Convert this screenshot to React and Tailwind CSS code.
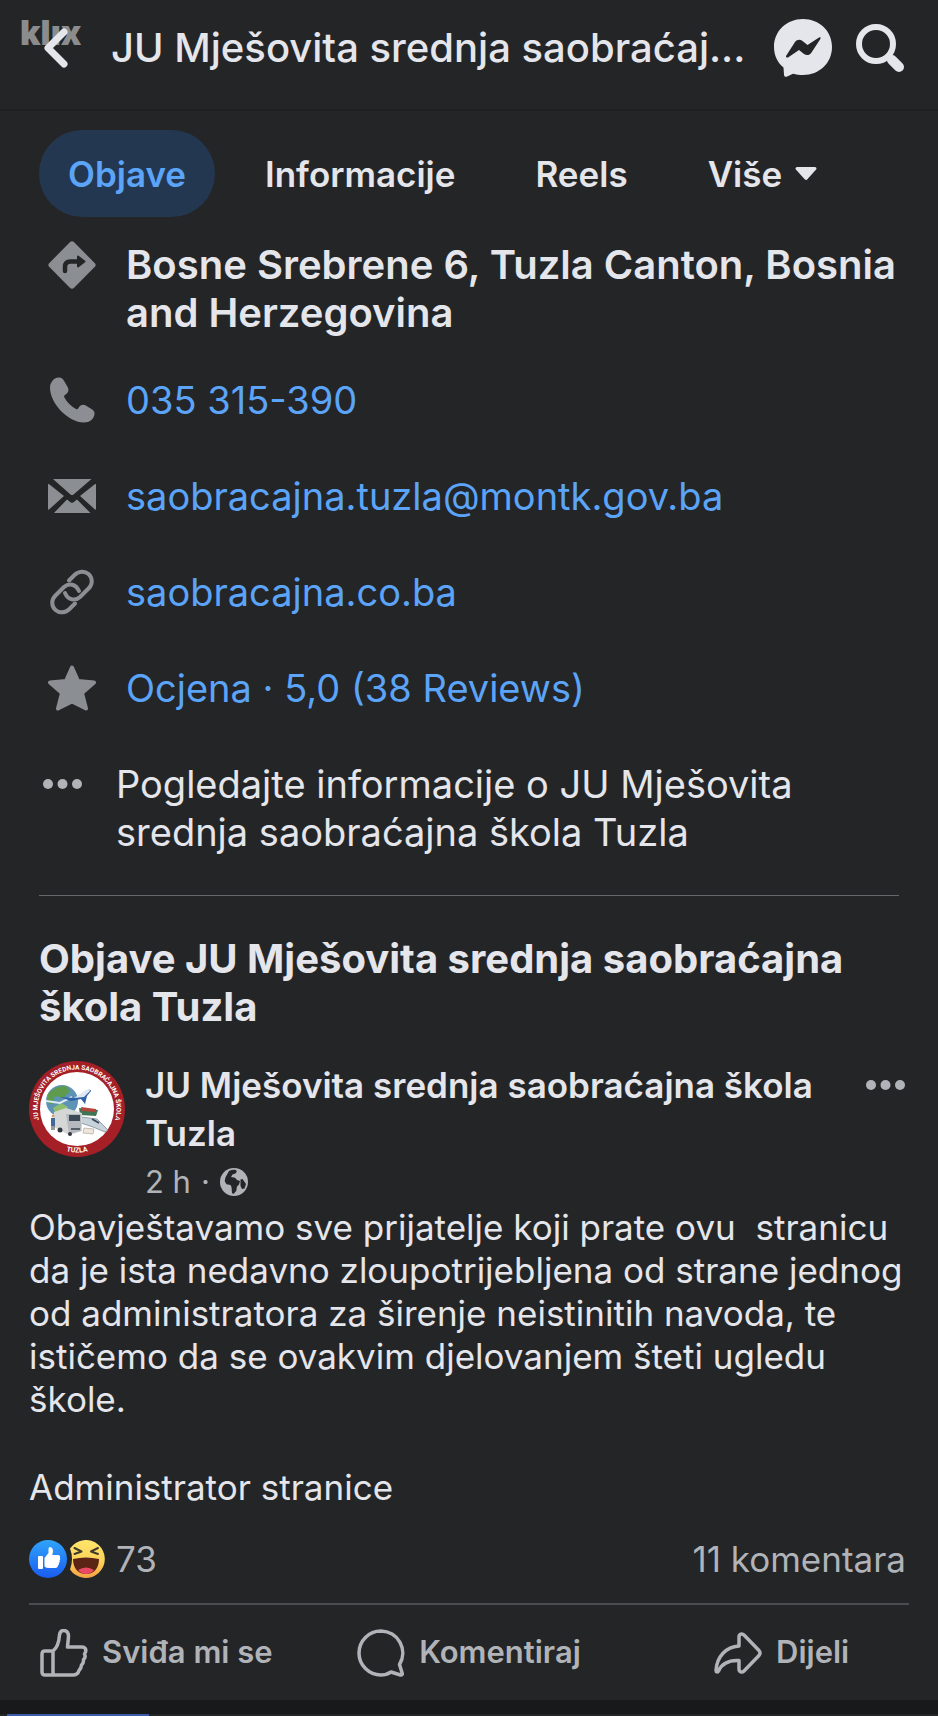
import React from 'react';

const MESSENGER = 'M29 0C12.500 0 0 12 0 28c0 8.500 3.500 15.500 9.500 20.500L10 55.500c0 2 1.500 2.800 3.200 2L19 54.700c3.200.9 6.500 1.300 10 1.300 16.500 0 29-12 29-28S45.500 0 29 0z';

function Dots() {
  return (
    <svg viewBox="0 0 40 10" className="w-10 h-[10px]" fill="#b0b3b8" aria-hidden="true">
      <circle cx="5" cy="5" r="5" />
      <circle cx="19.500" cy="5" r="5" />
      <circle cx="34" cy="5" r="5" />
    </svg>
  );
}

function DirectionsIcon() {
  return (
    <svg viewBox="0 0 48 48" className="w-12 h-12" aria-hidden="true">
      <rect x="6.500" y="6.500" width="35" height="35" rx="3" fill="#8b8e92" transform="rotate(45 24 24)" />
      <path d="M17 30v-4q0-5.500 5.500-5.500H31" fill="none" stroke="#242527" strokeWidth="4.500" strokeLinecap="round" />
      <path d="M30 15.500l6.500 5-6.500 5z" fill="#242527" stroke="#242527" strokeWidth="2" strokeLinejoin="round" />
    </svg>
  );
}

function PhoneIcon() {
  return (
    <svg viewBox="0 0 48 48" className="w-12 h-12" fill="#8b8e92" aria-hidden="true">
      <path d="M10.500 1.500C5.500 2 2 6.500 2 12c0 15 18 34.500 34 34.500 5.500 0 10-3.500 10.500-8.500.2-2-.5-3.500-2.300-4.600l-6-3.700c-3-1.700-6-.7-7.700 2.300-.8 1.200-1.500 1.400-2.500.9-5-2.700-9-6.700-11.600-11.500-.6-1-.3-1.900.9-2.600 3-1.700 4-4.800 2.300-7.800L15.500 4c-1.200-2-2.800-2.800-5-2.500z" />
    </svg>
  );
}

function MailIcon() {
  return (
    <svg viewBox="0 0 48 48" className="w-12 h-12" fill="#8b8e92" aria-hidden="true">
      <path d="M5 7h38.500L25.500 22.500q-1.500 1.200-3 0z" />
      <path d="M0 12.500q0-1 .9-.4L16 24 1 37.500q-1 .8-1-.5z" />
      <path d="M48 12.500q0-1-.9-.4L32 24l15 13.500q1 .8 1-.5z" />
      <path d="M6 41l13-13.500 3.500 2.800q1.500 1 3 0l3.500-2.800L42.500 41z" />
    </svg>
  );
}

function LinkIcon() {
  return (
    <svg viewBox="0 0 48 48" className="w-12 h-12" fill="none" stroke="#8b8e92" strokeWidth="4" strokeLinecap="round" aria-hidden="true">
      <path d="M21 12.500l5.500-5.500c4-4 10-4.500 14-1s4.500 10 .5 14l-9 9c-5 4.500-12 3-15-4" />
      <path d="M27 35.500L21.500 41c-4 4-10 4.500-14 1s-4.500-10-.5-14l9-9c5-4.500 12-3 15 4" />
    </svg>
  );
}

function StarIcon() {
  return (
    <svg viewBox="0 0 48 48" className="w-12 h-12" fill="#8b8e92" stroke="#8b8e92" strokeWidth="4" strokeLinejoin="round" aria-hidden="true">
      <path d="M24 3.500l6 13.500 16 1.500-12 10.500 4 15.500-14-7-14 7 4-15.500L2 18.500 18 17z" />
    </svg>
  );
}

function SchoolLogo() {
  return (
    <svg viewBox="0 0 96 96" className="w-24 h-24 shrink-0" role="img" aria-label="Logo škole">
      <defs>
        <path id="ring-top" d="M14 68A39.500 39.500 0 1 1 82 68" />
        <path id="ring-bottom" d="M20 81.500A44 44 0 0 0 76 81.500" />
      </defs>
      <circle cx="48" cy="48" r="48" fill="#a51f26" />
      <circle cx="48" cy="48" r="37" fill="#fff" />
      <circle cx="33" cy="40" r="16" fill="#5d93b5" />
      <path d="M19 33q8-9 18-8l4 5-7 7-8-2-3 9-5-3z" fill="#5f9b4c" />
      <path d="M24 47l8-5 7 4-3 8-8 2z" fill="#8dbd6e" />
      <path d="M17 40l14 2 12-6" stroke="#dcebf2" strokeWidth="2" fill="none" />
      <path d="M31 36l16 1 11-8q4-1 4 1l-4 5-2 8-4-5-10 2z" fill="#2f62a8" />
      <path d="M45 37l12-8q4-1 4 1l-6 6z" fill="#dfe8f1" />
      <path d="M50 47l19 2-2 6-16-1z" fill="#3f7554" />
      <path d="M52 46l15 2v3l-14-1z" fill="#b3463d" />
      <path d="M52 56l16 2 11 11-3 2-12-5-12-4z" fill="#c8d2da" stroke="#7b8b9c" strokeWidth=".8" />
      <path d="M63 58l7 4" stroke="#3a4a5c" strokeWidth="2" />
      <path d="M25 51l12-4 16 5v18l-13 4-15-8z" fill="#d5d6d6" />
      <path d="M37 53l15 0v17l-12 3z" fill="#b5b9bd" />
      <path d="M40 54h11v6H40z" fill="#3c4957" />
      <path d="M42 67h9v2h-9z" fill="#555d66" />
      <circle cx="31" cy="69" r="2.500" fill="#33383e" />
      <circle cx="41" cy="73" r="2" fill="#33383e" />
      <path d="M22 57h4v8h-4z" fill="#43699c" />
      <circle cx="24" cy="55" r="1.500" fill="#d8a06e" />
      <path d="M23 65v4M25 65v4" stroke="#333" strokeWidth="1" />
      <path d="M55 67l10 1-1 5-10-1z" fill="#eee5dc" stroke="#b1a59c" strokeWidth=".7" />
      <text fill="#fff" fontSize="6.500" fontWeight="700" fontFamily="Roboto, sans-serif">
        <textPath href="#ring-top" startOffset="50%" textAnchor="middle">JU MJEŠOVITA SREDNJA SAOBRAĆAJNA ŠKOLA</textPath>
      </text>
      <text fill="#fff" fontSize="7" fontWeight="700" fontFamily="Roboto, sans-serif">
        <textPath href="#ring-bottom" startOffset="50%" textAnchor="middle">TUZLA</textPath>
      </text>
    </svg>
  );
}

function GlobeIcon() {
  return (
    <svg viewBox="0 0 28 28" className="w-7 h-7" aria-hidden="true">
      <circle cx="14" cy="14" r="14" fill="#b0b3b8" />
      <path d="M9 3q3-1.500 6-1.200l2 1.200-1.500 2.500-3 1L11 9l4 .8 2 2.200 3 1-1 3.500-2 2-.8 4.500-2.700 3-1.500-1L11.500 19l-1-2-4-.8-1.800-3 .8-4z" fill="#242527" />
      <path d="M20.500 11.500l2-.5 3.500 5-1.500 4.500-2.500.5-1.500-3z" fill="#242527" />
    </svg>
  );
}

function LikeBadge() {
  return (
    <svg viewBox="0 0 38 38" className="w-[38px] h-[38px]" aria-hidden="true">
      <defs>
        <linearGradient id="like" x1="0" y1="0" x2="0" y2="1">
          <stop offset="0" stopColor="#2fa4fa" />
          <stop offset="1" stopColor="#1a5cf0" />
        </linearGradient>
      </defs>
      <circle cx="19" cy="19" r="19" fill="url(#like)" />
      <rect x="9" y="16" width="5" height="13" rx="1" fill="#fff" />
      <path d="M15.500 18l4-5V9q0-2 1.500-2 3 .3 3 4.500l-.7 3.500H29q2.500.3 2 2.800.6 1.500-.4 2.700.5 1.500-.6 2.500.2 1.800-1 2.500-.2 2.500-3 2.500h-6q-3 0-4.500-1.500z" fill="#fff" />
    </svg>
  );
}

function HahaBadge() {
  return (
    <svg viewBox="0 0 38 38" className="w-[38px] h-[38px]" aria-hidden="true">
      <defs>
        <linearGradient id="haha" x1="0" y1="0" x2="0" y2="1">
          <stop offset="0" stopColor="#fee56b" />
          <stop offset=".6" stopColor="#fdd058" />
          <stop offset="1" stopColor="#f5a143" />
        </linearGradient>
      </defs>
      <path d="M3 8.500A19 19 0 1 1 3 29.500Q5 24.500 5 19T3 8.500z" fill="url(#haha)" />
      <path d="M7.500 8l7 3.500-7 2.500M31 8l-7 3.500 7 2.500" stroke="#3f3a2d" strokeWidth="2" fill="none" strokeLinecap="round" strokeLinejoin="round" />
      <path d="M6 19q13-3 26 0c0 9-5 15-13 15S6 28 6 19z" fill="#5b2415" />
      <path d="M11 30q8-5 16 0-3 4-8 4t-8-4z" fill="#ec4a64" />
    </svg>
  );
}

const tabs = ['Informacije', 'Reels'];

const contacts = [
  { label: '035 315-390', href: 'tel:035315390', Icon: PhoneIcon },
  { label: 'saobracajna.tuzla@montk.gov.ba', href: 'mailto:saobracajna.tuzla@montk.gov.ba', Icon: MailIcon },
  { label: 'saobracajna.co.ba', href: '#web', Icon: LinkIcon },
  { label: 'Ocjena · 5,0 (38 Reviews)', href: '#reviews', Icon: StarIcon },
];

export default function App() {
  return (
    <div className="min-h-screen bg-[#242527] text-[#e4e6eb] font-['Inter',sans-serif]">
      {/* Top bar */}
      <header className="relative flex items-center h-[111px] pb-[14px] pl-10 pr-[34px] border-b-2 border-[#1f2022]">
        <span className="absolute left-5 top-[13px] text-[34px] leading-[40px] font-black text-[#8b8c8d]" aria-hidden="true">klıx</span>
        <button type="button" aria-label="Nazad" className="relative w-8 h-12 shrink-0">
          <svg viewBox="0 0 32 48" className="w-8 h-12" fill="none" stroke="#e4e6eb" strokeWidth="7" strokeLinecap="round" strokeLinejoin="round">
            <path d="M24 8L8 24l16 16" />
          </svg>
        </button>
        <h1 className="flex-1 min-w-0 ml-[39px] text-[40px] leading-[48px] font-medium whitespace-nowrap">
          JU Mješovita srednja saobraćaj...
        </h1>
        <div className="flex items-center gap-6">
          <button type="button" aria-label="Messenger">
            <svg viewBox="0 0 58 58" className="w-[58px] h-[58px]">
              <path d={MESSENGER} fill="#e4e6eb" />
              <path d="M12 37l9-14c2-2.500 5-3 7.500-1l5 4 11.500-7.500q2-.6 1.500 1.300L37.500 33.500c-2 3-5 3.300-7.500 1.500l-5-4-11 7.500q-2.500.5-2-1.500z" fill="#242527" />
            </svg>
          </button>
          <button type="button" aria-label="Pretraži">
            <svg viewBox="0 0 48 48" className="w-12 h-12" fill="none" stroke="#e4e6eb">
              <circle cx="20" cy="20" r="17" strokeWidth="6" />
              <path d="M32 32l4 4" strokeWidth="6" />
              <path d="M36 36l7 7" strokeWidth="10" strokeLinecap="round" />
            </svg>
          </button>
        </div>
      </header>

      {/* Tabs */}
      <nav className="flex items-center pt-[19px] pl-[39px] text-[35px] leading-[44px] font-semibold">
        <button type="button" className="h-[87px] px-[29px] rounded-full bg-[#233850] text-[#5ba4f8]">Objave</button>
        <div className="flex items-center gap-20 ml-[50px]">
          {tabs.map((tab) => (
            <button key={tab} type="button">{tab}</button>
          ))}
          <button type="button" className="flex items-center gap-3">
            Više
            <svg viewBox="0 0 24 16" className="w-6 h-4" fill="#e4e6eb" stroke="#e4e6eb" strokeWidth="3" strokeLinejoin="round" aria-hidden="true">
              <path d="M3 2.500h18L12 12.500z" />
            </svg>
          </button>
        </div>
      </nav>

      {/* Page info */}
      <section className="mx-[39px] pt-6 pb-[39px] border-b border-[#65676b] text-[38px] leading-[48px]">
        <div className="flex gap-[30px] pl-[9px] mb-[39px]">
          <DirectionsIcon />
          <p className="flex-1 text-[40px] leading-[48px] font-semibold">Bosne Srebrene 6, Tuzla Canton, Bosnia<br />and Herzegovina</p>
        </div>
        <ul className="flex flex-col gap-12">
          {contacts.map(({ label, href, Icon }) => (
            <li key={label} className="flex gap-[30px] pl-[9px]">
              <Icon />
              <a href={href} className="text-[#5ba4f8]">{label}</a>
            </li>
          ))}
        </ul>
        <a href="#about" className="flex gap-[33px] pl-1 mt-12">
          <span className="flex items-center h-12"><Dots /></span>
          <span className="flex-1">Pogledajte informacije o JU Mješovita<br />srednja saobraćajna škola Tuzla</span>
        </a>
      </section>

      <h2 className="px-[39px] pt-[39px] text-[40px] leading-[48px] font-bold">
        Objave JU Mješovita srednja saobraćajna<br />škola Tuzla
      </h2>

      {/* Post */}
      <article className="px-[29px]">
        <div className="flex pt-[30px]">
          <SchoolLogo />
          <div className="flex-1 ml-5">
            <h3 className="text-[35px] leading-[48px] font-semibold">JU Mješovita srednja saobraćajna škola<br />Tuzla</h3>
            <p className="flex items-center gap-[10px] text-[31px] leading-[49px] text-[#b0b3b8]">
              2 h <span>·</span> <GlobeIcon />
            </p>
          </div>
          <button type="button" aria-label="Više opcija" className="h-12 pr-[3px] shrink-0"><Dots /></button>
        </div>

        <p className="text-[35px] leading-[43px]">
          Obavještavamo sve prijatelje koji prate ovu &nbsp;stranicu<br />
          da je ista nedavno zloupotrijebljena od strane jednog<br />
          od administratora za širenje neistinitih navoda, te<br />
          ističemo da se ovakvim djelovanjem šteti ugledu<br />
          škole.
        </p>
        <p className="mt-[45px] text-[35px] leading-[43px]">Administrator stranice</p>

        <div className="flex items-center mt-7 pr-[3px] text-[35px] leading-[44px] text-[#b0b3b8]">
          <LikeBadge />
          <HahaBadge />
          <span className="ml-[11px]">73</span>
          <span className="ml-auto">11 komentara</span>
        </div>

        <div className="mt-[22px] border-t-2 border-[#4a4c50]">
          <div className="grid grid-cols-3 -mx-[29px] h-[95px] text-[31px] font-semibold text-[#b0b3b8]">
            <button type="button" className="flex items-center justify-center gap-[14px]">
              <svg viewBox="0 0 48 48" className="w-12 h-12" fill="none" stroke="#b0b3b8" strokeWidth="3.500" strokeLinejoin="round" aria-hidden="true">
                <path d="M13 22v24M5 22h8c4-3 6-9 6.500-16 .4-3 2-4.500 4-4.500 3.500 0 5 2.500 5 6L27.500 18H42c3 0 4.500 2.500 3.500 5l-1 2c1 2 .8 4-1 5.500.3 2.500-.3 4-2 5.500-.2 2.500-1 4-2.500 5.500C38 45 36 46 33 46H5c-2 0-3-1-3-3V25c0-2 1-3 3-3z" />
              </svg>
              Sviđa mi se
            </button>
            <button type="button" className="flex items-center justify-center gap-[14px]">
              <svg viewBox="0 0 48 48" className="w-12 h-12" fill="none" stroke="#b0b3b8" strokeWidth="3.500" strokeLinejoin="round" aria-hidden="true">
                <path d="M24 2a22 22 0 1 0 0 44c4 0 7-1 10-3l9.500 3c1.500.3 2-.5 1.700-1.700L42.500 35.500A22 22 0 0 0 24 2z" />
              </svg>
              Komentiraj
            </button>
            <button type="button" className="flex items-center justify-center gap-[14px]">
              <svg viewBox="0 0 48 48" className="w-12 h-12" fill="none" stroke="#b0b3b8" strokeWidth="3.500" strokeLinejoin="round" aria-hidden="true">
                <path d="M25 17V8c0-3 3-4 5-2l15 15.500q2 2.500 0 5L30 42c-2 2-5 1-5-2v-8.500C15 31 8 34 4.500 42c-.7 1.500-2.500 1-2.500-.5C3 27 12 18 25 17z" />
              </svg>
              Dijeli
            </button>
          </div>
        </div>
      </article>

      <div className="h-[14px] bg-[#18191a]" />
      <div className="ml-[7px] w-[142px] h-[2px] bg-[#3b5bab]" />
    </div>
  );
}
